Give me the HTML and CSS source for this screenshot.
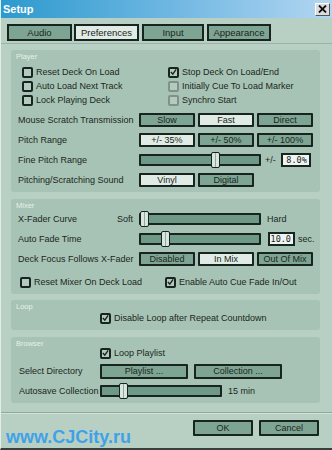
FILE: index.html
```html
<!DOCTYPE html>
<html lang="en">
<head>
  <meta charset="UTF-8" />
  <title>Setup</title>
  <link rel="stylesheet" href="styles.css">
</head>
<body>
  <div class="window">
    <div class="titlebar">
      <span class="title">Setup</span>
      <span class="close">
        <svg width="9" height="8" viewBox="0 0 9 8"><path d="M1 0.5 L8 7.5 M8 0.5 L1 7.5" stroke="#111" stroke-width="1.8"/></svg>
      </span>
    </div>

    <div class="tabs">
      <div class="tab">Audio</div>
      <div class="tab active">Preferences</div>
      <div class="tab">Input</div>
      <div class="tab">Appearance</div>
    </div>

    <div class="panel">
      <!-- Player -->
      <section class="group player">
        <div class="group-label">Player</div>
        <div class="checks">
          <div class="check-col left">
            <label class="check"><span class="box"></span>Reset Deck On Load</label>
            <label class="check"><span class="box"></span>Auto Load Next Track</label>
            <label class="check"><span class="box"></span>Lock Playing Deck</label>
          </div>
          <div class="check-col right">
            <label class="check"><span class="box checked"><svg width="8" height="8" viewBox="0 0 8 8"><path d="M1 4 L3.2 6.5 L7 1" stroke="#17241f" stroke-width="1.6" fill="none"/></svg></span>Stop Deck On Load/End</label>
            <label class="check"><span class="box faint"></span>Initially Cue To Load Marker</label>
            <label class="check"><span class="box faint"></span>Synchro Start</label>
          </div>
        </div>

        <div class="row">
          <span class="row-label">Mouse Scratch Transmission</span>
          <div class="btns">
            <button class="btn">Slow</button>
            <button class="btn on">Fast</button>
            <button class="btn">Direct</button>
          </div>
        </div>
        <div class="row">
          <span class="row-label">Pitch Range</span>
          <div class="btns">
            <button class="btn on">+/- 35%</button>
            <button class="btn">+/- 50%</button>
            <button class="btn">+/- 100%</button>
          </div>
        </div>
        <div class="row">
          <span class="row-label">Fine Pitch Range</span>
          <div class="slider"><span class="handle" style="left: 70px"></span></div>
          <span class="unit pm">+/-</span>
          <span class="field fine">8.0%</span>
        </div>
        <div class="row">
          <span class="row-label">Pitching/Scratching Sound</span>
          <div class="btns">
            <button class="btn on">Vinyl</button>
            <button class="btn">Digital</button>
          </div>
        </div>
      </section>

      <!-- Mixer -->
      <section class="group mixer">
        <div class="group-label">Mixer</div>
        <div class="row first">
          <span class="row-label">X-Fader Curve <em>Soft</em></span>
          <div class="slider"><span class="handle" style="left: -1px"></span></div>
          <span class="unit">Hard</span>
        </div>
        <div class="row">
          <span class="row-label">Auto Fade Time</span>
          <div class="slider"><span class="handle" style="left: 20px"></span></div>
          <span class="field fade">10.0</span>
          <span class="unit sec">sec.</span>
        </div>
        <div class="row">
          <span class="row-label">Deck Focus Follows X-Fader</span>
          <div class="btns">
            <button class="btn">Disabled</button>
            <button class="btn on">In Mix</button>
            <button class="btn">Out Of Mix</button>
          </div>
        </div>
        <div class="checks mixer-checks">
          <label class="check"><span class="box"></span>Reset Mixer On Deck Load</label>
          <label class="check"><span class="box checked"><svg width="8" height="8" viewBox="0 0 8 8"><path d="M1 4 L3.2 6.5 L7 1" stroke="#17241f" stroke-width="1.6" fill="none"/></svg></span>Enable Auto Cue Fade In/Out</label>
        </div>
      </section>

      <!-- Loop -->
      <section class="group loop">
        <div class="group-label">Loop</div>
        <div class="indent">
          <label class="check"><span class="box checked"><svg width="8" height="8" viewBox="0 0 8 8"><path d="M1 4 L3.2 6.5 L7 1" stroke="#17241f" stroke-width="1.6" fill="none"/></svg></span>Disable Loop after Repeat Countdown</label>
        </div>
      </section>

      <!-- Browser -->
      <section class="group browser">
        <div class="group-label">Browser</div>
        <div class="indent">
          <label class="check"><span class="box checked"><svg width="8" height="8" viewBox="0 0 8 8"><path d="M1 4 L3.2 6.5 L7 1" stroke="#17241f" stroke-width="1.6" fill="none"/></svg></span>Loop Playlist</label>
        </div>
        <div class="row first">
          <span class="row-label">Select Directory</span>
          <div class="btns wide">
            <button class="btn">Playlist ...</button>
            <button class="btn">Collection ...</button>
          </div>
        </div>
        <div class="row">
          <span class="row-label">Autosave Collection</span>
          <div class="slider"><span class="handle" style="left: 17px"></span></div>
          <span class="unit">15 min</span>
        </div>
      </section>
    </div>

    <div class="footer">
      <span class="watermark">www.CJCity.ru</span>
      <div class="actions">
        <button class="btn big">OK</button>
        <button class="btn big">Cancel</button>
      </div>
    </div>
  </div>
</body>
</html>
```

FILE: styles.css
```css
* {
  margin: 0;
  padding: 0;
  box-sizing: border-box;
}

body {
  font-family: "Liberation Sans", Arial, sans-serif;
  font-size: 9px;
  color: #1b2620;
  background: #2a2a2a;
}

.window {
  width: 332px;
  height: 450px;
  background: #b7d0c3;
  border-left: 1px solid #e4eee8;
  border-bottom: 2px solid #3a3f3c;
  overflow: hidden;
}

/* Title bar */
.titlebar {
  height: 18px;
  background: linear-gradient(90deg, #2c9acd 0%, #6db6e2 50%, #b3d6f1 100%);
  display: flex;
  align-items: center;
  justify-content: space-between;
  padding: 0 2px;
}

.title {
  color: #ffffff;
  font-weight: bold;
  font-size: 11px;
}

.close {
  width: 15px;
  height: 13px;
  background: #dcdcdc;
  border: 1px solid #ffffff;
  border-right-color: #555;
  border-bottom-color: #555;
  display: flex;
  align-items: center;
  justify-content: center;
}

/* Tabs */
.tabs {
  display: flex;
  gap: 2px;
  padding: 6px 0 2px 6px;
  border-bottom: 1px solid #9ab4a7;
}

.tab {
  height: 17px;
  width: 65px;
  border: 2px solid #17241f;
  background: #7ea594;
  font-size: 9.5px;
  display: flex;
  align-items: center;
  justify-content: center;
}

.tab:nth-child(3) {
  width: 62px;
  margin-left: 1px;
}

.tab:nth-child(4) {
  width: 64px;
  margin-left: 1px;
}

.tab.active {
  background: #e0ebe5;
}

/* Panel and groups */
.panel {
  padding: 6px 12px 0 10px;
}

.group {
  background: #a7c3b5;
  border-radius: 3px;
  padding: 2px 0 5px 0;
}

.group + .group {
  margin-top: 7px;
}

.mixer {
  margin-top: 8px;
}

.loop {
  margin-top: 6px !important;
}

.group-label {
  font-size: 7.5px;
  line-height: 9px;
  color: #e6efea;
  margin-left: 5px;
}

.checks {
  display: flex;
  margin-top: 4px;
}

.check-col {
  display: flex;
  flex-direction: column;
}

.check-col.left {
  margin-left: 11px;
  width: 146px;
}

.check {
  height: 14px;
  display: flex;
  align-items: center;
  gap: 3px;
  white-space: nowrap;
}

.box {
  width: 11px;
  height: 11px;
  border: 2px solid #17241f;
  border-radius: 2px;
  background: #b3cbbf;
  display: flex;
  align-items: center;
  justify-content: center;
}

.box.faint {
  border-color: #7f918a;
}

.row {
  display: flex;
  align-items: center;
  height: 14px;
  margin-top: 6px;
}

.mixer .row.first {
  margin-top: 2px;
}

.row-label {
  width: 128px;
  padding-left: 7px;
  padding-right: 6px;
  display: flex;
  justify-content: space-between;
  white-space: nowrap;
}

.row-label em {
  font-style: normal;
}

.btns {
  display: flex;
  gap: 3px;
}

.btn {
  width: 56px;
  height: 14px;
  border: 2px solid #17241f;
  border-radius: 1px;
  background: #7ea594;
  color: #1b2620;
  font-family: inherit;
  font-size: 9px;
  display: flex;
  align-items: center;
  justify-content: center;
}

.btn.on {
  background: #e0ebe5;
}

.btns.wide {
  gap: 6px;
}

.btns.wide .btn {
  width: 88px;
  height: 15px;
}

/* Sliders */
.slider {
  position: relative;
  width: 122px;
  height: 12px;
  border: 2px solid #17241f;
  border-radius: 1px;
  background: #6f9987;
}

.handle {
  position: absolute;
  top: -4px;
  width: 9px;
  height: 16px;
  border: 1px solid #17241f;
  border-radius: 2px;
  background: linear-gradient(90deg, #d8e6df 0 3px, #8fa99c 3px 4px, #d8e6df 4px);
}

.unit {
  margin-left: 6px;
  white-space: nowrap;
}

.unit.pm {
  margin-left: 4px;
}

.unit.sec {
  margin-left: 3px;
}

.field {
  height: 14px;
  border: 2px solid #17241f;
  background: #eef4f1;
  font-family: "DejaVu Sans Mono", monospace;
  font-size: 8.5px;
  display: flex;
  align-items: center;
  justify-content: flex-end;
  padding-right: 2px;
}

.field.fine {
  width: 30px;
  margin-left: 5px;
}

.field.fade {
  width: 27px;
  margin-left: 7px;
}

.mixer-checks {
  margin-top: 9px;
  margin-left: 9px;
}

.mixer-checks .check:first-child {
  width: 145px;
}

.indent {
  margin-left: 89px;
}

.browser .indent {
  margin-top: -2px;
}

.browser .row.first {
  margin-top: 4px;
}

.browser .row-label {
  width: 89px;
  padding-left: 8px;
}

/* Footer */
.footer {
  margin-top: 9px;
  border-top: 1px solid #8ea89b;
  box-shadow: inset 0 1px 0 #d3e2da;
  display: flex;
  justify-content: space-between;
  padding: 7px 13px 0 5px;
}

.watermark {
  font-weight: bold;
  font-size: 18px;
  line-height: 18px;
  color: #3fa2e8;
  margin-top: 8px;
}

.actions {
  display: flex;
  gap: 6px;
}

.btn.big {
  width: 60px;
  height: 16px;
}
```
